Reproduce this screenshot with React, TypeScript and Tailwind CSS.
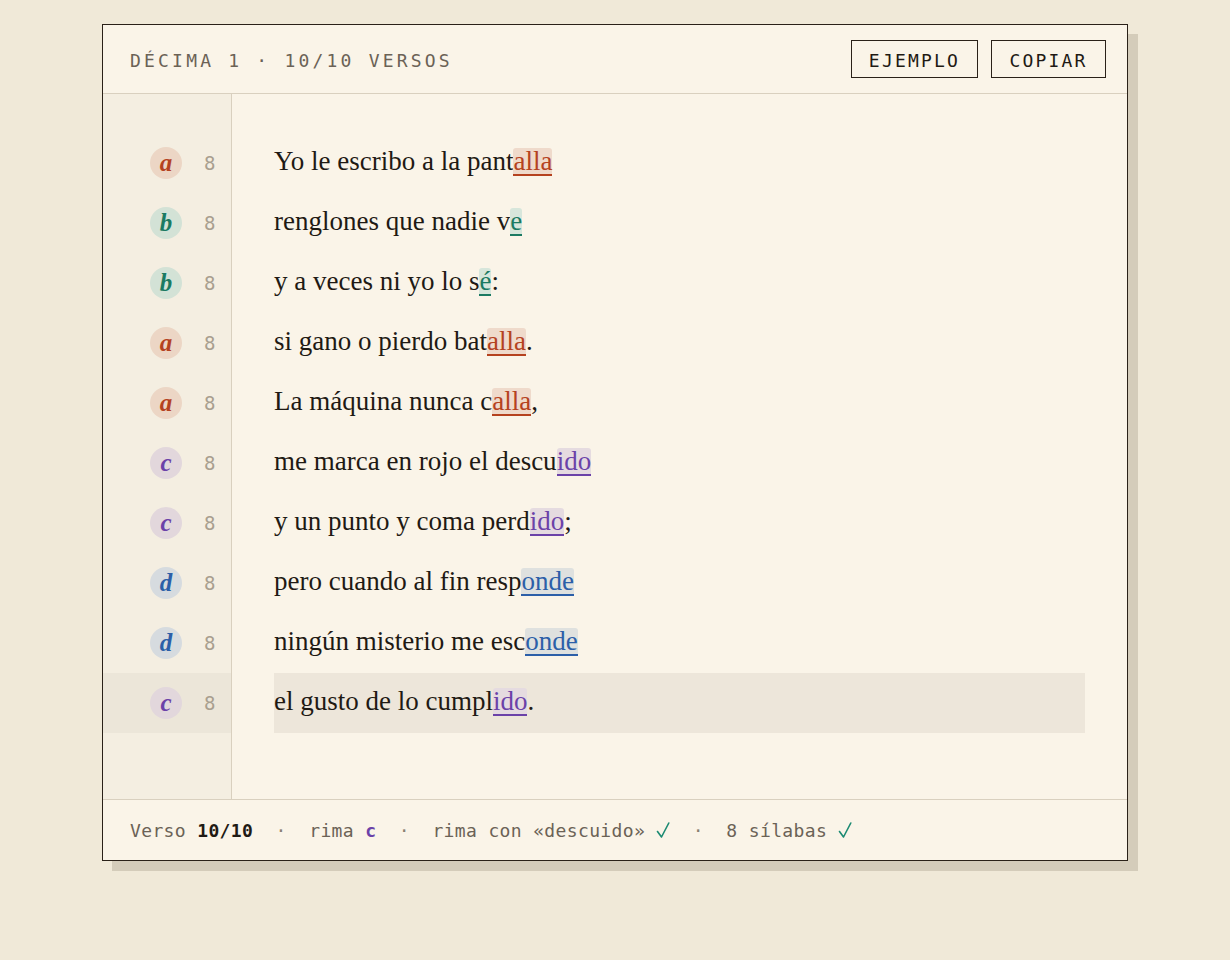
import React from "react";

type R = "a" | "b" | "c" | "d";

const rhymeText: Record<R, string> = {
  a: "text-[#b5421f] bg-[#efdacb] border-[#b5421f]",
  b: "text-[#1b7a62] bg-[#d7e6db] border-[#1b7a62]",
  c: "text-[#6b42a8] bg-[#e5dbe0] border-[#6b42a8]",
  d: "text-[#2c5fa8] bg-[#dfe1df] border-[#2c5fa8]",
};

const badge: Record<R, string> = {
  a: "bg-[#ecd6c5] text-[#b5421f]",
  b: "bg-[#d3e2d6] text-[#1b7a62]",
  c: "bg-[#e2d7dc] text-[#6b42a8]",
  d: "bg-[#d6dbdf] text-[#2c5fa8]",
};

const lines: { r: R; pre: string; rh: string; post: string }[] = [
  { r: "a", pre: "Yo le escribo a la pant", rh: "alla", post: "" },
  { r: "b", pre: "renglones que nadie v", rh: "e", post: "" },
  { r: "b", pre: "y a veces ni yo lo s", rh: "é", post: ":" },
  { r: "a", pre: "si gano o pierdo bat", rh: "alla", post: "." },
  { r: "a", pre: "La máquina nunca c", rh: "alla", post: "," },
  { r: "c", pre: "me marca en rojo el descu", rh: "ido", post: "" },
  { r: "c", pre: "y un punto y coma perd", rh: "ido", post: ";" },
  { r: "d", pre: "pero cuando al fin resp", rh: "onde", post: "" },
  { r: "d", pre: "ningún misterio me esc", rh: "onde", post: "" },
  { r: "c", pre: "el gusto de lo cumpl", rh: "ido", post: "." },
];

const mono = "font-['DejaVu_Sans_Mono',monospace]";
const serif = "font-['Liberation_Serif',serif]";

function Check() {
  return (
    <svg width="14" height="18" viewBox="0 0 14 18" className="inline-block" aria-label="✓">
      <path d="M1.5 10.5 L5.5 16 L12.8 2" fill="none" stroke="#1b8a72" strokeWidth="1.6" strokeLinecap="round" strokeLinejoin="round" />
    </svg>
  );
}

export default function App() {
  return (
    <div className="min-h-[960px] w-full bg-[#f0e9d8] pt-[24px]">
      <div className="mx-auto w-[1026px] border border-[#2a2118] bg-[#faf4e8] shadow-[10px_10px_0_0_#d4ccba]">
        {/* header */}
        <div className="flex h-[69px] items-center justify-between border-b border-[#d9d0bf] pl-[27px] pr-[21px]">
          <div className={`${mono} pt-[2px] text-[18px] tracking-[3.2px] text-[#6b6256]`}>
            DÉCIMA 1 · 10/10 VERSOS
          </div>
          <div className="flex gap-[13px]">
            <button className={`${mono} h-[38px] w-[127px] border border-[#2a2118] pt-[2px] text-[18px] tracking-[2.2px] text-[#1f1a14]`}>
              EJEMPLO
            </button>
            <button className={`${mono} h-[38px] w-[115px] border border-[#2a2118] pt-[2px] text-[18px] tracking-[2.2px] text-[#1f1a14]`}>
              COPIAR
            </button>
          </div>
        </div>
        {/* body */}
        <div className="flex h-[705px]">
          <div className="w-[129px] shrink-0 border-r border-[#d9d0bf] bg-[#f4eee1] pt-[39px]">
            {lines.map((l, i) => (
              <div
                key={i}
                className={`flex h-[60px] items-center pl-[47px] ${i === 9 ? "bg-[#ece6d9]" : ""}`}
              >
                <div
                  className={`flex h-[32px] w-[32px] items-center justify-center rounded-full ${badge[l.r]} ${serif} text-[25px] font-bold italic leading-none`}
                >
                  <span className="-mt-[1px]">{l.r}</span>
                </div>
                <div className={`${mono} ml-[22px] text-[19px] text-[#a99f8f]`}>8</div>
              </div>
            ))}
          </div>
          <div className="flex-1 px-[42px] pt-[39px]">
            {lines.map((l, i) => (
              <div
                key={i}
                className={`flex h-[60px] items-center ${serif} text-[27px] text-[#1f1a14] ${i === 9 ? "bg-[#ede6da]" : ""}`}
              >
                <span className="-mt-[4px] whitespace-pre">
                  {l.pre}
                  <span
                    className={`inline-block rounded-t-[3px] border-b-2 leading-[26px] ${rhymeText[l.r]}`}
                  >
                    {l.rh}
                  </span>
                  {l.post}
                </span>
              </div>
            ))}
          </div>
        </div>
        {/* footer */}
        <div
          className={`flex h-[61px] items-center border-t border-[#d9d0bf] pl-[27px] ${mono} whitespace-pre text-[18px] tracking-[0.36px] text-[#6b6256]`}
        >
          <span>Verso </span>
          <span className="font-bold text-[#1f1a14]">10/10</span>
          <span className="text-[#8a8174]">  ·  </span>
          <span>rima </span>
          <span className="font-bold text-[#6b42a8]">c</span>
          <span className="text-[#8a8174]">  ·  </span>
          <span>rima con «descuido» </span>
          <Check />
          <span className="text-[#8a8174]">  ·  </span>
          <span>8 sílabas </span>
          <Check />
        </div>
      </div>
    </div>
  );
}
